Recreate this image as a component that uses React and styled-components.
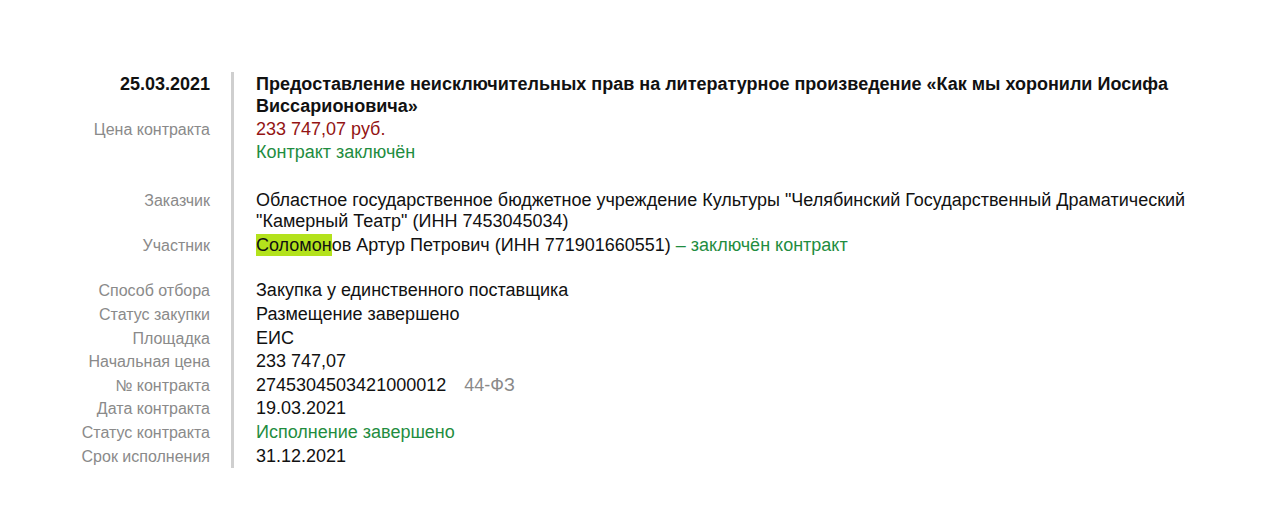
import React from "react";
import styled, { createGlobalStyle } from "styled-components";

const Global = createGlobalStyle`
  html, body { margin: 0; padding: 0; background: #fff; }
  body { font-family: "Liberation Sans", Arial, sans-serif; color: #111; }
`;

const Page = styled.div`
  padding-top: 72px;
  padding-bottom: 44px;
`;

const Grid = styled.div`
  display: grid;
  grid-template-columns: 231px 1fr;
  width: 1230px;
`;

const Label = styled.div`
  text-align: right;
  padding: ${(p) => 1.3 + (p.$gap || 0)}px 21px ${(p) => (p.$date ? 0 : 1.3)}px 0;
  font-size: ${(p) => (p.$date ? "18px" : "16px")};
  font-weight: ${(p) => (p.$date ? 700 : 400)};
  color: ${(p) => (p.$date ? "#111" : "#8a8a8a")};
  line-height: ${(p) => (p.$date ? "22px" : "21px")};
`;

const Value = styled.div`
  border-left: 3px solid #cfcfcf;
  padding: ${(p) => 1.3 + (p.$gap || 0)}px 0 ${(p) => (p.$bold ? 0 : 1.3)}px 22px;
  font-size: 18px;
  line-height: ${(p) => (p.$bold ? "22px" : "21px")};
  font-weight: ${(p) => (p.$bold ? 700 : 400)};
  color: ${(p) =>
    p.$tone === "red" ? "#931414" : p.$tone === "green" ? "#1f8d3f" : "#111"};
`;

const Mark = styled.span`
  background: #b3e21c;
  padding: 1px 0;
`;

const Green = styled.span`
  color: #1f8d3f;
`;

const Law = styled.span`
  color: #8a8a8a;
  margin-left: 18px;
`;

const Row = ({ label, date, gap, children, ...rest }) => (
  <>
    <Label $date={date} $gap={gap}>{label}</Label>
    <Value $gap={gap} {...rest}>{children}</Value>
  </>
);

export default function App() {
  return (
    <Page>
      <Global />
      <Grid>
        <Row label="25.03.2021" date $bold>
          Предоставление неисключительных прав на литературное произведение «Как мы хоронили Иосифа Виссарионовича»
        </Row>
        <Row label="Цена контракта" $tone="red">233 747,07 руб.</Row>
        <Row label="" $tone="green">Контракт заключён</Row>
        <Row label="Заказчик" gap={24.5}>
          Областное государственное бюджетное учреждение Культуры "Челябинский Государственный Драматический "Камерный Театр" (ИНН 7453045034)
        </Row>
        <Row label="Участник">
          <Mark>Соломон</Mark>ов Артур Петрович (ИНН 771901660551) <Green>– заключён контракт</Green>
        </Row>
        <Row label="Способ отбора" gap={22}>Закупка у единственного поставщика</Row>
        <Row label="Статус закупки">Размещение завершено</Row>
        <Row label="Площадка">ЕИС</Row>
        <Row label="Начальная цена">233 747,07</Row>
        <Row label="№ контракта">
          2745304503421000012<Law>44-ФЗ</Law>
        </Row>
        <Row label="Дата контракта">19.03.2021</Row>
        <Row label="Статус контракта" $tone="green">Исполнение завершено</Row>
        <Row label="Срок исполнения">31.12.2021</Row>
      </Grid>
    </Page>
  );
}
